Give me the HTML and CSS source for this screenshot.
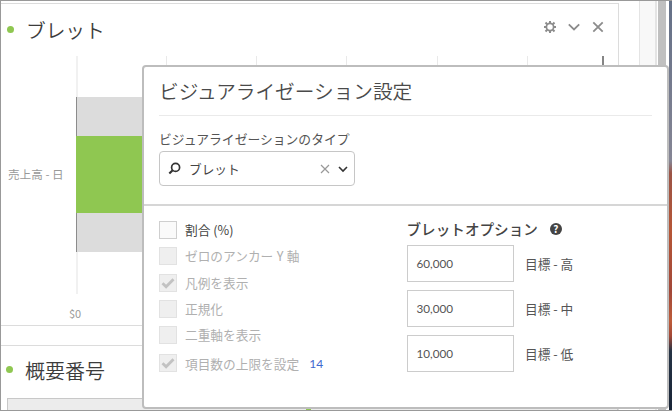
FILE: index.html
```html
<!DOCTYPE html>
<html lang="ja">
<head>
<meta charset="utf-8">
<title>ビジュアライゼーション設定</title>
<link rel="stylesheet" href="styles.css">
</head>
<body>
<div class="app">
  <main class="workspace">
    <section class="panel">
      <header class="panel-head">
        <i class="dot"></i><h2>ブレット</h2>
        <div class="tools">
          <svg width="12" height="12" viewBox="0 0 12 12"><circle cx="6" cy="6" r="3.6" fill="none" stroke="#8c8c8c" stroke-width="1.7"/><path d="M6 0v2M6 10v2M0 6h2M10 6h2M1.5 1.5l1.700 1.700M8.800 8.800l1.700 1.700M10.500 1.500L8.800 3.200M3.200 8.800l-1.700 1.700" stroke="#8c8c8c" stroke-width="2"/></svg>
          <svg width="12" height="12" viewBox="0 0 12 12"><path d="M.8 3.300L6 8.400l5.200-5.100" fill="none" stroke="#8c8c8c" stroke-width="1.800"/></svg>
          <svg width="12" height="12" viewBox="0 0 12 12"><path d="M1.300 1.300l9.400 9.400M10.700 1.300L1.300 10.700" stroke="#8c8c8c" stroke-width="1.800"/></svg>
        </div>
      </header>
      <div class="chart">
        <span class="axis-label">売上高 - 日</span>
        <div class="plot">
          <svg width="530" height="238" viewBox="0 0 530 238" shape-rendering="crispEdges">
            <path d="M91 0v238M181 0v238M271 0v238M362 0v238M452 0v238" stroke="#e9e9e9" transform="translate(-.5)"/>
            <path d="M0 0h2v238H0z" fill="#f1f1f1"/>
            <path d="M1 41h500v155H1z" fill="#dcdcdc"/>
            <path d="M0 41h1v155H0z" fill="#8c8c8c"/>
            <path d="M0 80h430v77H0z" fill="#8fc751"/>
            <path d="M526 0h2v238h-2z" fill="#858585"/>
          </svg>
          <span class="tick">$0</span>
        </div>
      </div>
    </section>
    <section class="panel summary">
      <header class="panel-head"><i class="dot"></i><h2>概要番号</h2></header>
      <div class="table-head"><i class="marker"></i></div>
    </section>
  </main>
  <aside class="rail"></aside>
  <aside class="scrollbar"><i></i></aside>
  <aside class="backdrop"></aside>
</div>

<div class="dialog">
  <div class="dialog-top">
    <h1>ビジュアライゼーション設定</h1>
    <div class="field-label">ビジュアライゼーションのタイプ</div>
    <div class="select">
      <svg width="13" height="13" viewBox="0 0 13 13"><circle cx="7.600" cy="5.400" r="4" fill="none" stroke="#333" stroke-width="1.700"/><path d="M4.700 8.300L1.300 11.500" stroke="#333" stroke-width="2.200"/></svg>
      <span>ブレット</span>
      <svg width="10" height="10" viewBox="0 0 10 10"><path d="M1 1l8 8M9 1L1 9" stroke="#999" stroke-width="1.200"/></svg>
      <svg width="10" height="10" viewBox="0 0 10 10"><path d="M1 3l4 4 4-4" fill="none" stroke="#333" stroke-width="1.600"/></svg>
    </div>
  </div>
  <div class="dialog-body">
    <div class="checks">
      <div class="check on"><i></i><span>割合 (%)</span></div>
      <div class="check"><i></i><span>ゼロのアンカー <b>Y</b> 軸</span></div>
      <div class="check"><i><svg viewBox="0 0 16 16"><path d="M2.500 8.200l3.600 3.600 7.400-7.600" fill="none" stroke="#c2c2c2" stroke-width="2.800"/></svg></i><span>凡例を表示</span></div>
      <div class="check"><i></i><span>正規化</span></div>
      <div class="check"><i></i><span>二重軸を表示</span></div>
      <div class="check last"><i><svg viewBox="0 0 16 16"><path d="M2.500 8.200l3.600 3.600 7.400-7.600" fill="none" stroke="#c2c2c2" stroke-width="2.800"/></svg></i><span>項目数の上限を設定</span><a>14</a></div>
    </div>
    <div class="options">
      <h3>ブレットオプション <em>?</em></h3>
      <div class="target"><div class="input">60,000</div><span>目標 - 高</span></div>
      <div class="target"><div class="input">30,000</div><span>目標 - 中</span></div>
      <div class="target"><div class="input">10,000</div><span>目標 - 低</span></div>
    </div>
  </div>
</div>
</body>
</html>
```
FILE: styles.css
```css
* { box-sizing: border-box; }
body {
  margin: 0;
  width: 672px;
  height: 411px;
  overflow: hidden;
  position: relative;
  background: #fff;
  color: #444;
  font-family: "Noto Sans CJK JP", sans-serif;
  font-size: 12.7px;
}
h1, h2, h3 { margin: 0; font-weight: 350; }
svg { display: block; flex: none; }

.app {
  display: flex;
  height: 411px;
  overflow: hidden;
  border: solid #999;
  border-width: 1px 0 1px 1px;
}
.workspace { width: 618px; flex: none; padding-top: 2px; }
.panel {
  height: 323px;
  border: solid #dcdcdc;
  border-width: 1px 1px 1px 0;
}
.summary { margin-top: 19px; height: 80px; }
.panel-head {
  display: flex;
  align-items: center;
  height: 52px;
  padding: 0 14px 0 6px;
}
.panel-head h2 { font-size: 19.7px; color: #3c3c3c; margin-left: 12px; line-height: 52px; }
.dot { width: 7px; height: 7px; margin-top: -1px; border-radius: 50%; background: #8fc751; }
.tools { display: flex; gap: 12px; margin: -6px 0 0 auto; }
.summary .panel-head { height: 52px; padding-left: 5px; }
.summary h2 { font-size: 20px; line-height: 50px; margin-top: -3px; }
.summary .dot { margin-top: -5px; }
.table-head { height: 30px; margin-left: 6px; padding: 10px 0 0 298px; background: #ececec; border: 1px solid #c8c8c8; }
.marker { display: block; width: 5px; height: 2px; background: #8fc751; }

.chart { display: flex; }
.axis-label { width: 75px; padding: 108px 0 0 7px; font-size: 11.6px; line-height: 20px; color: #999; white-space: nowrap; }
.tick { display: block; margin: 9px 0 0 -7px; font-size: 11px; line-height: 20px; color: #999; }

.rail, .scrollbar, .backdrop { flex: none; }
.rail { width: 18px; margin-left: 20px; background: #f8f8f8; border: solid #e4e4e4; border-width: 0 2px 0 1px; }
.scrollbar { width: 12px; padding-left: 1px; display: flex; }
.scrollbar i { width: 8px; background: #c0c0c0; }
.backdrop {
  width: 3px;
  margin-left: auto;
  background: linear-gradient(#647087 0, #858594 160px, #9b5446 172px, #b65636 230px, #a24839 290px, #bd5c3a 320px, #a34836 335px, #263345 350px, #182436 409px);
}

.dialog {
  position: absolute;
  left: 142px;
  top: 65px;
  width: 527px;
  height: 344px;
  border: 2px solid #bdbdbd;
  border-radius: 4px;
  background: #fff;
}
.dialog-top { height: 139px; padding: 0 15px; border-bottom: 2px solid #d6d6d6; }
h1 { height: 49px; font-size: 19.65px; line-height: 48px; color: #4a4a4a; border-bottom: 1px solid #eaeaea; }
.field-label { margin-top: 13px; line-height: 20px; height: 21px; font-size: 12.8px; color: #555; }
.select {
  display: flex;
  align-items: center;
  width: 196px;
  height: 35px;
  margin-top: 1px;
  padding: 0 6px 0 8px;
  border: 1px solid #c6c6c6;
  border-radius: 4px;
}
.select span { margin: -1px auto 0 8px; color: #444; }
.select svg + svg { margin-left: 8px; }

.dialog-body { display: flex; padding: 15px 15px 0; }
.checks { width: 247.500px; }
.check { display: flex; align-items: center; height: 18px; margin-bottom: 8.300px; color: #b0b0b0; white-space: nowrap; }
.check i { width: 18px; height: 18px; margin-right: 8px; background: #efefef; border: 1px solid #e2e2e2; flex: none; }
.check span { margin-top: -1px; }
.check b { font-weight: 400; margin: 0 .5px; }
.check a { margin: 0 0 0 10px; font-family: Lato, sans-serif; font-size: 12px; color: #3f69cf; }
.check.on { color: #444; }
.check.on i { background: #fafafa; border-color: #cfcfcf; }
.check.last { margin-top: 10px; }
.check.last span { margin-top: 0; }
.options { margin-top: -2px; }
.options h3 { display: flex; align-items: center; gap: 12px; height: 18px; margin-bottom: 8px; font-size: 14.6px; font-weight: 500; color: #444; }
.options em {
  width: 12px;
  height: 12px;
  margin-top: 2px;
  border-radius: 50%;
  background: #444;
  color: #fff;
  font: bold 10px/12px "Noto Sans CJK JP", sans-serif;
  text-align: center;
}
.target { display: flex; align-items: center; gap: 11.500px; height: 37px; margin-bottom: 8px; color: #555; }
.input { width: 107px; height: 37px; padding-left: 9px; border: 1px solid #ccc; font-family: Lato, sans-serif; font-size: 11.7px; line-height: 35px; color: #555; }
```
